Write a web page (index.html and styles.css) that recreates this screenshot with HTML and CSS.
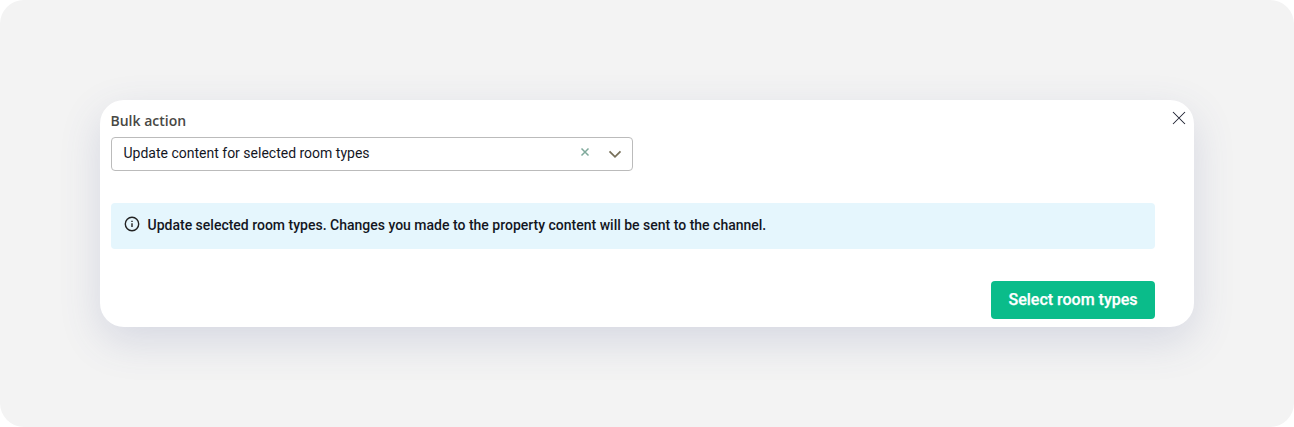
FILE: index.html
```html
<!DOCTYPE html>
<html lang="en">
<head>
<meta charset="utf-8">
<title>Bulk action</title>
<link rel="stylesheet" href="styles.css">
</head>
<body>
<main class="stage">
  <section class="dialog">
    <div class="content">
      <label class="label">Bulk action</label>
      <div class="select">
        <span class="value">Update content for selected room types</span>
        <svg class="clear" width="10" height="10" viewBox="0 0 10 10"><path d="M1.5 1.5 8.5 8.5M8.5 1.5 1.5 8.5"/></svg>
        <svg class="chevron" width="14" height="10" viewBox="0 0 14 10"><path d="M1.5 2.3 7 7.8 12.5 2.3"/></svg>
      </div>
      <div class="notice">
        <svg class="info" width="16" height="16" viewBox="0 0 16 16"><circle cx="8" cy="8" r="6.7"/><path d="M8 7.2V11.1M8 4.8V6"/></svg>
        <span>Update selected room types. Changes you made to the property content will be sent to the channel.</span>
      </div>
      <button class="submit">Select room types</button>
    </div>
    <svg class="close" width="14" height="14" viewBox="0 0 14 14"><path d="M1 1 13 13M13 1 1 13"/></svg>
  </section>
</main>
</body>
</html>
```
FILE: styles.css
```css
* { box-sizing: border-box; }
body { margin: 0; background: #fff; font-family: Roboto, sans-serif; color: #14161f; }
svg { display: block; flex: none; fill: none; }
.stage { height: 427px; padding: 100px; background: #f3f3f3; border-radius: 24px; }
.dialog { display: flex; justify-content: space-between; height: 227px; padding: 11px 8px 8px 11px; background: #fff; border-radius: 24px; box-shadow: 0 14px 40px rgba(70, 85, 140, 0.17); }
.content { display: flex; flex-direction: column; width: 1044px; }
.label { height: 20px; margin-left: -0.5px; font: 600 14px/20px "Open Sans", sans-serif; color: #484844; }
.select { display: flex; align-items: center; width: 522px; height: 34px; margin-top: 6px; padding: 0 10px 2px 11.5px; border: 1px solid #bbb; border-radius: 4px; font-size: 14px; }
.value { flex: 1; }
.clear { margin: 0 18px 2px 0; stroke: #7fa99b; stroke-width: 1.5; }
.chevron { margin-top: 1px; stroke: #77705a; stroke-width: 1.8; }
.notice { display: flex; align-items: center; gap: 7.5px; height: 46px; margin-top: 32px; padding: 0 13px 2px; background: #e5f6fd; border-radius: 4px; font-size: 14px; font-weight: 500; }
.info { margin-bottom: 2px; stroke: #222; stroke-width: 1.4; }
.submit { align-self: flex-end; width: 164px; height: 38px; margin-top: 32px; padding: 0; border: 0; border-radius: 4px; background: #0abc8a; color: #fff; font: 500 16px/36px Roboto, sans-serif; -webkit-text-stroke: 0.25px #fff; }
.close { stroke: #1d2030; stroke-width: 1.05; }
```
